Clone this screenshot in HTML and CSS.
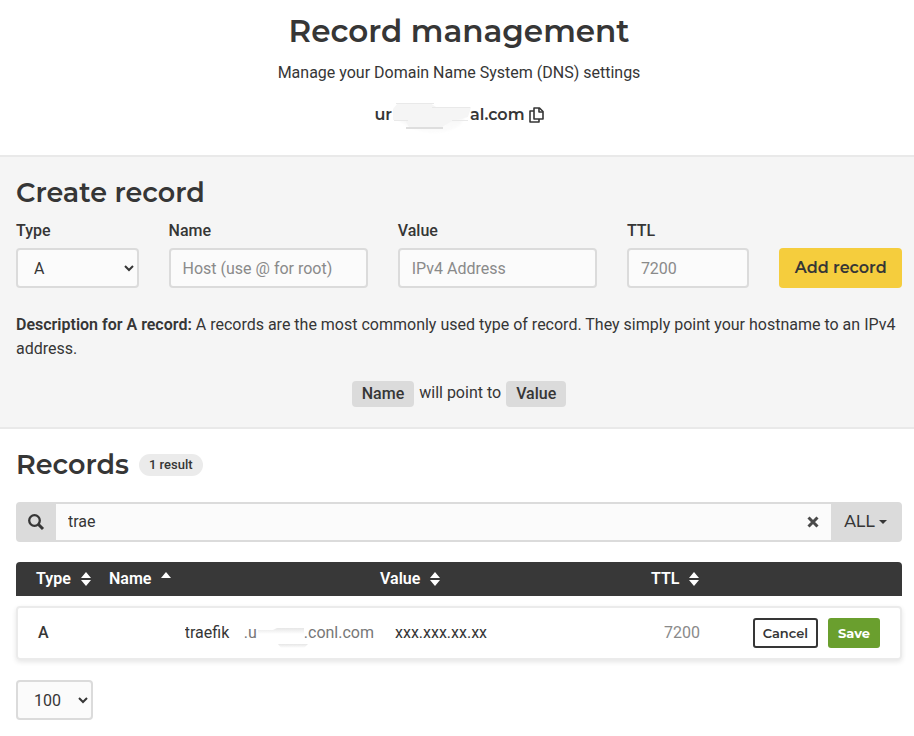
FILE: index.html
```html
<!DOCTYPE html>
<html lang="en">
<head>
<meta charset="utf-8">
<meta name="viewport" content="width=device-width, initial-scale=1">
<title>Record management</title>
<link rel="stylesheet" href="styles.css">
</head>
<body>
<header class="page-header">
  <h1>Record management</h1>
  <p class="lead">Manage your Domain Name System (DNS) settings</p>
  <div class="domain">
    <span>ur</span>
    <svg class="domain-mask" viewBox="0 0 78 40" aria-hidden="true">
      <defs>
        <linearGradient id="fade" x1="0" y1="0" x2="0" y2="1"><stop offset="0" stop-color="#f4f4f4"/><stop offset="1" stop-color="#fdfdfd"/></linearGradient>
        <filter id="soft" x="-10%" y="-10%" width="120%" height="120%"><feGaussianBlur stdDeviation="1"/></filter>
      </defs>
      <path d="M2 14H78L68 30Q48 44 22 34Q6 28 2 18Z" fill="url(#fade)" filter="url(#soft)"/>
      <path d="M6 8H38L44 12H79L76 22L60 26L50 32H17L13 25H1V14Z" fill="#f5f5f5"/>
      <path d="M4 8.500H42M40 12.500H78M2 25.500H16M60 25.500H76" stroke="#e9e9e9" stroke-width="1"/>
      <path d="M14 33H51" stroke="#dedede" stroke-width="2"/>
    </svg>
    <span>al.com</span>
    <button class="icon-button copy" type="button" aria-label="Copy domain">
      <svg width="15" height="16" viewBox="0 0 15 16" fill="none" stroke="#363636" stroke-width="1.600" stroke-linejoin="round">
        <path d="M5 1H10.500L14 4.500V12H5Z"/><path d="M10 1V5H14" stroke-width="1.600"/><path d="M5 4H1V15H10V12"/>
      </svg>
    </button>
  </div>
</header>

<section class="create">
  <h2>Create record</h2>
  <form class="record-form">
    <div class="field"><label for="type">Type</label><select id="type"><option>A</option></select></div>
    <div class="field"><label for="name">Name</label><input id="name" type="text" placeholder="Host (use @ for root)"></div>
    <div class="field"><label for="value">Value</label><input id="value" type="text" placeholder="IPv4 Address"></div>
    <div class="field"><label for="ttl">TTL</label><input id="ttl" type="text" placeholder="7200"></div>
    <button class="add" type="button">Add record</button>
  </form>
  <p class="description"><strong>Description for A record:</strong> A records are the most commonly used type of record. They simply point your hostname to an IPv4 address.</p>
  <p class="summary"><span class="tag">Name</span><span>will point to</span><span class="tag">Value</span></p>
</section>

<main class="records">
  <div class="records-title"><h2>Records</h2><span class="count">1 result</span></div>
  <div class="search">
    <label class="search-icon" for="search" aria-label="Search records">
      <svg width="16" height="16" viewBox="0 0 16 16" fill="none" stroke="#363636"><circle cx="6.500" cy="6.500" r="5.300" stroke-width="2.300"/><path d="M10.500 10.500L15 15" stroke-width="3"/></svg>
    </label>
    <input id="search" type="text" value="trae">
    <button class="icon-button clear" type="button" aria-label="Clear search">
      <svg width="12" height="12" viewBox="0 0 12 12" stroke="#4a4a4a" stroke-width="3"><path d="M1.500 1.500L10.500 10.500M10.500 1.500L1.500 10.500"/></svg>
    </button>
    <button class="filter" type="button">ALL<svg width="8" height="4" viewBox="0 0 8 4"><path d="M0 0H8L4 4Z" fill="#363636"/></svg></button>
  </div>

  <table>
    <thead>
      <tr>
        <th><button type="button">Type<svg width="10" height="14" viewBox="0 0 10 14"><path d="M0 6L5 0L10 6ZM0 8H10L5 14Z" fill="#fff"/></svg></button></th>
        <th><button type="button">Name<svg width="10" height="14" viewBox="0 0 10 14"><path d="M0 6L5 0L10 6Z" fill="#fff"/></svg></button></th>
        <th><button type="button">Value<svg width="10" height="14" viewBox="0 0 10 14"><path d="M0 6L5 0L10 6ZM0 8H10L5 14Z" fill="#fff"/></svg></button></th>
        <th><button type="button">TTL<svg width="10" height="14" viewBox="0 0 10 14"><path d="M0 6L5 0L10 6ZM0 8H10L5 14Z" fill="#fff"/></svg></button></th>
      </tr>
    </thead>
    <tbody>
      <tr>
        <td class="cell-type">A</td>
        <td class="cell-name">
          <input type="text" value="traefik" aria-label="Name">
          <span class="suffix"><span>.u</span><svg class="suffix-mask" viewBox="0 0 47 28" aria-hidden="true">
            <defs><linearGradient id="shade" x1="0" y1="0" x2="0" y2="1"><stop offset="0" stop-color="#e6e6e6"/><stop offset="1" stop-color="#fff"/></linearGradient></defs>
            <path d="M1 11H16L20 9H47V15H1Z" fill="url(#shade)"/><path d="M21 25H51L47 29H24Z" fill="url(#shade)"/>
          </svg><span>.conl.com</span></span>
        </td>
        <td class="cell-value"><input type="text" value="xxx.xxx.xx.xx" aria-label="Value"></td>
        <td class="cell-ttl"><input type="text" placeholder="7200" aria-label="TTL"></td>
        <td class="cell-actions"><button class="cancel" type="button">Cancel</button><button class="save" type="button">Save</button></td>
      </tr>
    </tbody>
  </table>
  <select class="page-size" aria-label="Records per page"><option>100</option></select>
</main>
</body>
</html>
```
FILE: styles.css
```css
* { box-sizing: border-box; }

body {
  margin: 0;
  background: #fff;
  color: #363636;
  font: 16px/24px Roboto, sans-serif;
}

h1, h2, p { margin: 0; }

h1, h2, .domain, .add, .filter, .cancel, .save {
  font-family: Montserrat, Inter, sans-serif;
}

h1 { font-size: 31px; line-height: 40px; font-weight: 600; }
h2 { font-size: 27px; line-height: 32px; font-weight: 600; }

input, select, button { font: inherit; color: inherit; }
button { padding: 0; border: 0; background: none; cursor: pointer; }
::placeholder { color: #8a8a8a; opacity: 1; }
svg { display: block; overflow: visible; }

.page-header {
  padding: 11px 12px 20px 16px;
  border-bottom: 2px solid #e9e9e9;
  text-align: center;
}
.lead { margin-top: 10px; }
.domain {
  display: flex;
  justify-content: center;
  align-items: center;
  height: 40px;
  margin-top: 10px;
  font-weight: 600;
}
.domain-mask { width: 78px; height: 40px; }
.icon-button { display: flex; }
.copy { margin-left: 4px; }

.create {
  padding: 20px 12px 20px 16px;
  background: #f5f5f5;
  border-bottom: 2px solid #e9e9e9;
}
.record-form {
  display: grid;
  grid-template-columns: 8fr 13fr 13fr 8fr 8fr;
  gap: 30px;
  align-items: end;
  margin-top: 10px;
}
.field { display: grid; gap: 5px; min-width: 0; }
.field label { font-weight: 500; }
.field input, select {
  width: 100%;
  min-width: 0;
  height: 40px;
  padding: 0 12px;
  background: #fbfbfb;
  border: 2px solid #dbdbdb;
  border-radius: 4px;
}
.add {
  height: 40px;
  border-radius: 4px;
  background: #f5cd3d;
  font-weight: 600;
}
.description { margin-top: 25px; }
strong { font-weight: 600; }
.summary {
  display: flex;
  justify-content: center;
  gap: 5px;
  margin-top: 20px;
}
.tag {
  height: 26px;
  padding: 0 10px;
  border-radius: 4px;
  background: #dbdbdb;
  font-weight: 500;
  line-height: 26px;
}

.records { padding: 20px 12px 16px 16px; }
.records-title { display: flex; align-items: center; gap: 10px; }
.count {
  padding: 0 10px;
  border-radius: 12px;
  background: #ebebeb;
  font-size: 13px;
  font-weight: 500;
  line-height: 22px;
}
.search {
  display: flex;
  height: 40px;
  margin-top: 21px;
  border: 2px solid #dbdbdb;
  border-radius: 4px;
  background: #fbfbfb;
}
.search-icon { display: grid; place-items: center; width: 38px; padding-right: 2px; background: #dbdbdb; }
.search input { flex: 1; min-width: 0; padding: 0 12px; border: 0; background: none; }
.clear { width: 36px; align-items: center; justify-content: center; }
.filter {
  display: flex;
  align-items: center;
  justify-content: center;
  gap: 4px;
  width: 69px;
  background: #dbdbdb;
  font-weight: 500;
}

table, thead, tbody { display: block; }
table { margin-top: 20px; }
thead tr {
  display: grid;
  grid-template-columns: 73px 1fr 1fr 251px;
  align-items: center;
  height: 34px;
  padding-left: 20px;
  border-radius: 4px 4px 0 0;
  background: #383838;
  color: #fff;
}
th { padding: 0; text-align: left; font-weight: 600; }
th button { display: flex; align-items: center; gap: 10px; }
tbody tr {
  display: grid;
  grid-template-columns: 80px 256fr 290fr 78px 138px;
  align-items: center;
  height: 54px;
  margin-top: 10px;
  padding: 0 20px;
  border: 2px solid #ebebeb;
  border-radius: 4px;
  box-shadow: 0 2px 5px #0000001a;
}
td { padding: 0; min-width: 0; }
td input { min-width: 0; padding: 0; border: 0; background: none; }
.cell-type { font-weight: 500; }
.cell-name { display: flex; align-items: center; justify-content: flex-end; gap: 14px; }
.cell-name input { width: 45px; }
.suffix { display: flex; align-items: center; height: 24px; color: #777; }
.suffix-mask { width: 47px; height: 28px; }
.cell-value { padding-left: 21px; }
.cell-value input, .cell-ttl input { width: 100%; }
.cell-actions { display: flex; justify-content: flex-end; gap: 10px; }
.cancel, .save {
  height: 30px;
  padding: 0 10px;
  border-radius: 3px;
  font-size: 13px;
  font-weight: 600;
}
.cancel { padding: 0 8px; border: 2px solid #363636; }
.save { background: #6a9f2e; color: #fff; font-weight: 700; }
.page-size { width: 77px; margin-top: 20px; }
```
